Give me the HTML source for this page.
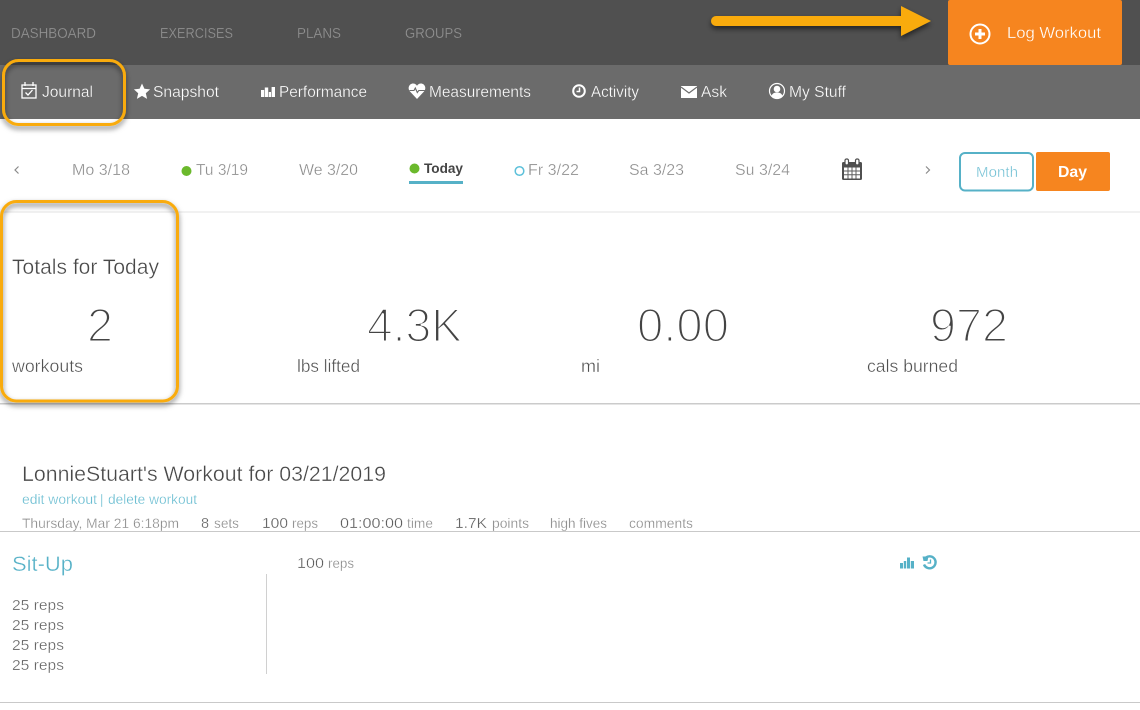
<!DOCTYPE html>
<html lang="en">
<head>
<meta charset="utf-8">
<title>Journal</title>
<style>
html,body{margin:0;padding:0;background:#fff;width:1140px;height:710px;overflow:hidden}
svg{display:block;position:absolute;left:0;top:0}
text{font-family:"Liberation Sans",sans-serif;white-space:pre}
.top{font-size:14.5px;fill:#919191;stroke:#505050;stroke-width:.2px}
.sub{font-size:15.5px;fill:#fff;stroke:#6b6b6b;stroke-width:.3px}
.day{font-size:15.5px;fill:#8a8a8a;stroke:#fff;stroke-width:.3px}
.big{font-size:47.5px;fill:#444;stroke:#fff;stroke-width:2px}
.lab{font-size:17.5px;fill:#505050;stroke:#fff;stroke-width:.35px}
.gr{font-size:14px;fill:#8a8a8a;stroke:#fff;stroke-width:.25px}
.dk{font-size:14.5px;fill:#5c5c5c;stroke:#fff;stroke-width:.25px}
.lk{font-size:13.5px;fill:#62bacf;stroke:#fff;stroke-width:.25px}
.rp{font-size:15px;fill:#5c5c5c;stroke:#fff;stroke-width:.3px}
.hd{font-size:21px;fill:#484848;stroke:#fff;stroke-width:.35px}
</style>
</head>
<body>
<svg width="1140" height="710" viewBox="0 0 1140 710" xmlns="http://www.w3.org/2000/svg">
<defs>
<filter id="sh" x="-20%" y="-20%" width="140%" height="140%"><feDropShadow dx="0" dy="3" stdDeviation="2.6" flood-color="#000" flood-opacity=".55"/></filter>
</defs>
<rect width="1140" height="710" fill="#fff"/>
<rect width="1140" height="65" fill="#505050"/>
<rect y="65" width="1140" height="54" fill="#6b6b6b"/>

<text class="top" x="11" y="38" textLength="85" lengthAdjust="spacingAndGlyphs">DASHBOARD</text>
<text class="top" x="160" y="38" textLength="73" lengthAdjust="spacingAndGlyphs">EXERCISES</text>
<text class="top" x="297" y="38" textLength="44" lengthAdjust="spacingAndGlyphs">PLANS</text>
<text class="top" x="405" y="38" textLength="57" lengthAdjust="spacingAndGlyphs">GROUPS</text>

<rect x="948" y="0" width="174" height="65" rx="2" fill="#f6851f"/>
<circle cx="980" cy="34" r="9.5" fill="none" stroke="#fff" stroke-width="2"/>
<path d="M980 29v10M975 34h10" stroke="#fff" stroke-width="3" fill="none"/>
<text x="1007" y="38" font-size="16" fill="#fff" stroke="#f6851f" stroke-width=".3" textLength="94" lengthAdjust="spacingAndGlyphs">Log Workout</text>

<g filter="url(#sh)">
<path d="M716 16H901V6L931 21 901 36V26H716a5 5 0 0 1 0-10Z" fill="#f9ab08"/>
</g>

<!-- subnav -->
<g fill="none" stroke="#fff" stroke-width="1.3">
<rect x="22" y="85" width="14" height="13"/>
<path d="M22 88.5h14M25 82v4M33 82v4"/>
<path d="M25.5 92.5l2.500 2.500 4.500-5"/>
</g>
<text class="sub" x="42" y="97" textLength="51" lengthAdjust="spacingAndGlyphs">Journal</text>
<path d="M142 83.500l2.400 5.300 5.700.6-4.300 3.800 1.300 5.700-5.100-3-5.100 3 1.300-5.700-4.300-3.800 5.700-.6Z" fill="#fff"/>
<text class="sub" x="153" y="97" textLength="66" lengthAdjust="spacingAndGlyphs">Snapshot</text>
<path d="M261 90h3.200v7H261ZM264.800 87.500h3.400V97h-3.400ZM268.800 92h2.200v5h-2.200ZM271.600 87h3.400v10h-3.400Z" fill="#fff"/>
<text class="sub" x="279" y="97" textLength="88" lengthAdjust="spacingAndGlyphs">Performance</text>
<path d="M417 99l-7-7.500c-3-3.500-.5-8 3-8 1.800 0 3.200 1 4 2.300.8-1.300 2.200-2.300 4-2.300 3.500 0 6 4.500 3 8Z" fill="#fff"/>
<path d="M409.500 90.500h4.500l1.300-2.500 2 4.500 1.500-2h6" fill="none" stroke="#6b6b6b" stroke-width="1.100"/>
<text class="sub" x="429" y="97" textLength="102" lengthAdjust="spacingAndGlyphs">Measurements</text>
<circle cx="579" cy="91" r="5.800" fill="none" stroke="#fff" stroke-width="2"/>
<path d="M579.500 87.500v4h-3" fill="none" stroke="#fff" stroke-width="1.500"/>
<text class="sub" x="591" y="97" textLength="48" lengthAdjust="spacingAndGlyphs">Activity</text>
<rect x="681" y="86" width="16" height="12" fill="#fff"/>
<path d="M681 87l8 6 8-6" fill="none" stroke="#6b6b6b" stroke-width="1.100"/>
<text class="sub" x="701" y="97" textLength="26" lengthAdjust="spacingAndGlyphs">Ask</text>
<circle cx="777" cy="91" r="7.500" fill="none" stroke="#fff" stroke-width="1.200"/>
<circle cx="777" cy="89" r="3.300" fill="#fff"/>
<path d="M771.500 96c1-3 3-3.500 5.500-3.500s4.500.5 5.500 3.500c-1.500 1.600-3.300 2.200-5.500 2.200s-4-.6-5.500-2.200Z" fill="#fff"/>
<text class="sub" x="789" y="97" textLength="57" lengthAdjust="spacingAndGlyphs">My Stuff</text>

<!-- date row -->
<path d="M18.500 166.500l-3.500 3.500 3.500 3.500" fill="none" stroke="#8a8a8a" stroke-width="1.200"/>
<text class="day" x="72" y="175" textLength="58" lengthAdjust="spacingAndGlyphs">Mo 3/18</text>
<circle cx="186.500" cy="171" r="5" fill="#6bb92c"/>
<text class="day" x="196" y="175" textLength="52" lengthAdjust="spacingAndGlyphs">Tu 3/19</text>
<text class="day" x="299" y="175" textLength="59" lengthAdjust="spacingAndGlyphs">We 3/20</text>
<circle cx="414.500" cy="168.500" r="5" fill="#6bb92c"/>
<text x="424" y="173" font-size="14" font-weight="700" fill="#444" textLength="39" lengthAdjust="spacingAndGlyphs">Today</text>
<rect x="409" y="181" width="54" height="3" fill="#56b1c7"/>
<circle cx="519.500" cy="171" r="4.300" fill="none" stroke="#5cc0da" stroke-width="1.500"/>
<text class="day" x="528" y="175" textLength="51" lengthAdjust="spacingAndGlyphs">Fr 3/22</text>
<text class="day" x="629" y="175" textLength="55" lengthAdjust="spacingAndGlyphs">Sa 3/23</text>
<text class="day" x="735" y="175" textLength="55" lengthAdjust="spacingAndGlyphs">Su 3/24</text>
<g>
<rect x="842" y="162" width="20" height="18" rx="1.500" fill="#4f4f4f"/>
<rect x="844" y="167.500" width="16" height="11" fill="#fff"/>
<path d="M844 171h16M844 174.700h16M848 167.500v11M852 167.500v11M856 167.500v11" stroke="#5f5f5f" stroke-width="1"/>
<rect x="845" y="159" width="3.500" height="6" rx="1.500" fill="#fff" stroke="#4f4f4f" stroke-width="1.200"/>
<rect x="855.500" y="159" width="3.500" height="6" rx="1.500" fill="#fff" stroke="#4f4f4f" stroke-width="1.200"/>
</g>
<path d="M926 166.500l3.500 3.500-3.500 3.500" fill="none" stroke="#8a8a8a" stroke-width="1.200"/>
<rect x="960" y="153" width="73" height="37.500" rx="5" fill="#fff" stroke="#56b1c7" stroke-width="2"/>
<text x="976" y="177" font-size="15" fill="#6fbfd3" stroke="#fff" stroke-width=".3" textLength="42" lengthAdjust="spacingAndGlyphs">Month</text>
<rect x="1036" y="152" width="74" height="39" rx="2" fill="#f6851f"/>
<text x="1058" y="177" font-size="16" font-weight="700" fill="#fff" textLength="29" lengthAdjust="spacingAndGlyphs">Day</text>
<rect y="211" width="1140" height="2" fill="#f1f1f1"/>

<!-- totals -->
<text class="hd" x="12" y="274" textLength="147" lengthAdjust="spacingAndGlyphs">Totals for Today</text>
<text class="big" x="87" y="341.500" textLength="26" lengthAdjust="spacingAndGlyphs">2</text>
<text class="big" x="367" y="341.500" textLength="95" lengthAdjust="spacingAndGlyphs">4.3K</text>
<text class="big" x="637" y="341.500" textLength="92" lengthAdjust="spacingAndGlyphs">0.00</text>
<text class="big" x="930" y="341.500" textLength="78" lengthAdjust="spacingAndGlyphs">972</text>
<text class="lab" x="12" y="372" textLength="71" lengthAdjust="spacingAndGlyphs">workouts</text>
<text class="lab" x="297" y="372" textLength="63" lengthAdjust="spacingAndGlyphs">lbs lifted</text>
<text class="lab" x="581" y="372" textLength="19" lengthAdjust="spacingAndGlyphs">mi</text>
<text class="lab" x="867" y="372" textLength="91" lengthAdjust="spacingAndGlyphs">cals burned</text>
<rect y="403" width="1140" height="1.500" fill="#cbcbcb"/>

<!-- workout -->
<text class="hd" x="22" y="481" textLength="364" lengthAdjust="spacingAndGlyphs">LonnieStuart's Workout for 03/21/2019</text>
<text class="lk" x="22" y="504" textLength="75" lengthAdjust="spacingAndGlyphs">edit workout</text>
<text class="lk" x="100" y="504" textLength="3">|</text>
<text class="lk" x="108" y="504" textLength="89" lengthAdjust="spacingAndGlyphs">delete workout</text>
<text class="gr" x="22" y="528" textLength="157" lengthAdjust="spacingAndGlyphs">Thursday, Mar 21 6:18pm</text>
<text class="dk" x="201" y="528" textLength="8">8</text>
<text class="gr" x="214" y="528" textLength="25" lengthAdjust="spacingAndGlyphs">sets</text>
<text class="dk" x="262" y="528" textLength="26" lengthAdjust="spacingAndGlyphs">100</text>
<text class="gr" x="292" y="528" textLength="26" lengthAdjust="spacingAndGlyphs">reps</text>
<text class="dk" x="340" y="528" textLength="63" lengthAdjust="spacingAndGlyphs">01:00:00</text>
<text class="gr" x="407" y="528" textLength="26" lengthAdjust="spacingAndGlyphs">time</text>
<text class="dk" x="455" y="528" textLength="32" lengthAdjust="spacingAndGlyphs">1.7K</text>
<text class="gr" x="492" y="528" textLength="37" lengthAdjust="spacingAndGlyphs">points</text>
<text class="gr" x="550" y="528" textLength="57" lengthAdjust="spacingAndGlyphs">high fives</text>
<text class="gr" x="629" y="528" textLength="64" lengthAdjust="spacingAndGlyphs">comments</text>
<rect y="531" width="1140" height="1" fill="#c9c9c9"/>

<text x="12" y="571" font-size="21.500" fill="#56b1c7" stroke="#fff" stroke-width=".35" textLength="61" lengthAdjust="spacingAndGlyphs">Sit-Up</text>
<text class="rp" x="297" y="568" textLength="27" lengthAdjust="spacingAndGlyphs">100</text>
<text class="gr" x="328" y="568" textLength="26" lengthAdjust="spacingAndGlyphs">reps</text>
<path d="M900 563h3v5.500h-3ZM903.800 561h2.400v7.500h-2.400ZM907 557.500h3v11h-3ZM910.800 561h3.200v7.500h-3.200Z" fill="#56b1c7"/>
<path d="M926 557.500a6 6 0 1 1-2 7" fill="none" stroke="#56b1c7" stroke-width="2.400"/>
<path d="M922.500 556.500h6l-1 4.500h-4Z" fill="#56b1c7"/>
<path d="M930.500 559.500v3.500h-3" fill="none" stroke="#56b1c7" stroke-width="1.300"/>
<rect x="266" y="574" width="1" height="100" fill="#d0d0d0"/>
<text class="rp" x="12" y="610" textLength="52" lengthAdjust="spacingAndGlyphs">25 reps</text>
<text class="rp" x="12" y="630" textLength="52" lengthAdjust="spacingAndGlyphs">25 reps</text>
<text class="rp" x="12" y="650" textLength="52" lengthAdjust="spacingAndGlyphs">25 reps</text>
<text class="rp" x="12" y="670" textLength="52" lengthAdjust="spacingAndGlyphs">25 reps</text>
<rect y="702" width="1140" height="1" fill="#c9c9c9"/>

<!-- callouts -->
<g filter="url(#sh)" fill="none" stroke="#f9ab08" stroke-width="3">
<rect x="3.500" y="60.500" width="121" height="64" rx="15"/>
<rect x="1.500" y="201.500" width="176" height="199.500" rx="15"/>
</g>
</svg>
</body>
</html>
